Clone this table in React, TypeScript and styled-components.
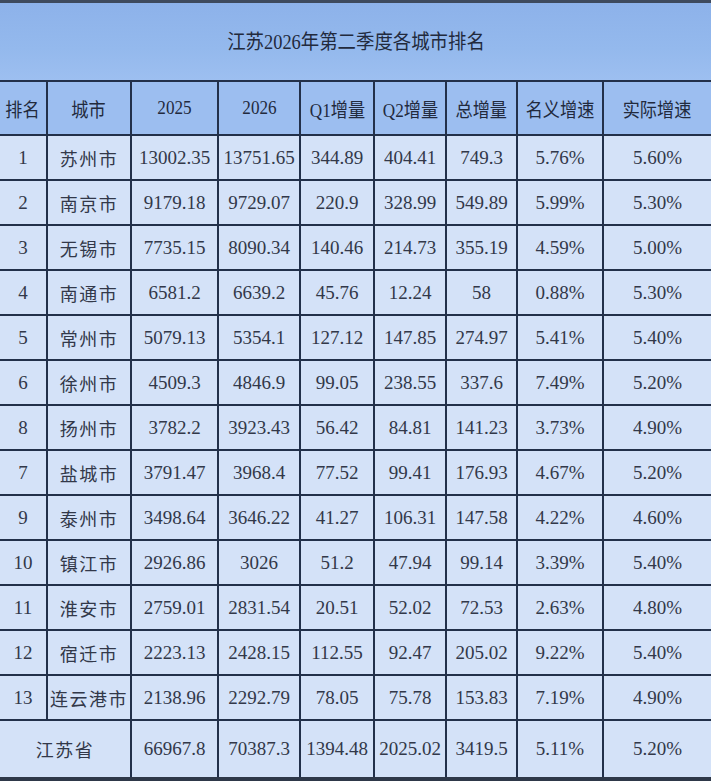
import React from "react";
import styled, { createGlobalStyle } from "styled-components";

const Global = createGlobalStyle`
  html, body { margin: 0; padding: 0; background: #d3e1f8; }
  body { font-family: "Liberation Serif", "Noto Sans CJK SC", serif; }
`;

const Page = styled.div`
  width: 711px;
  display: flex;
  flex-direction: column;
`;

const EdgeBar = styled.div<{ $h: number; $c: string }>`
  height: ${(p) => p.$h}px;
  background: ${(p) => p.$c};
`;

const Grid = styled.div`
  display: grid;
  grid-template-columns: 46px 82px 85px 80px 72px 70px 69px 84px 107px;
  grid-template-rows: 77px 52px repeat(13, 43px) 56px;
  gap: 2px;
  background: #22304a;
`;

const TitleCell = styled.div`
  grid-column: 1 / -1;
  display: flex;
  align-items: center;
  justify-content: center;
  background: linear-gradient(180deg, #8db2ea 0%, #94b9ed 60%, #9dbff0 100%);
  color: #222a3d;
  font-size: 20px;
  padding-bottom: 2px;
`;

const HeadCell = styled.div`
  display: flex;
  align-items: center;
  justify-content: center;
  background: #9cbef0;
  color: #222a3d;
  font-size: 19.5px;
  white-space: nowrap;
  overflow: hidden;
`;

const Condensed = styled.span<{ $sx: number }>`
  display: inline-block;
  transform: scaleX(${(p) => p.$sx});
  white-space: nowrap;
`;

const DataCell = styled.div<{ $cjk?: boolean; $span?: number }>`
  grid-column: span ${(p) => p.$span ?? 1};
  display: flex;
  align-items: center;
  justify-content: center;
  background: #d4e2f8;
  color: #323849;
  font-size: ${(p) => (p.$cjk ? 18 : 19)}px;
  letter-spacing: ${(p) => (p.$cjk ? "1.5px" : "0")};
  font-family: ${(p) =>
    p.$cjk ? `"Noto Sans CJK SC", sans-serif` : `"Liberation Serif", "Noto Sans CJK SC", serif`};
  white-space: nowrap;
  overflow: hidden;
`;

const headers = ["排名", "城市", "2025", "2026", "Q1增量", "Q2增量", "总增量", "名义增速", "实际增速"];

const rows: string[][] = [
  ["1", "苏州市", "13002.35", "13751.65", "344.89", "404.41", "749.3", "5.76%", "5.60%"],
  ["2", "南京市", "9179.18", "9729.07", "220.9", "328.99", "549.89", "5.99%", "5.30%"],
  ["3", "无锡市", "7735.15", "8090.34", "140.46", "214.73", "355.19", "4.59%", "5.00%"],
  ["4", "南通市", "6581.2", "6639.2", "45.76", "12.24", "58", "0.88%", "5.30%"],
  ["5", "常州市", "5079.13", "5354.1", "127.12", "147.85", "274.97", "5.41%", "5.40%"],
  ["6", "徐州市", "4509.3", "4846.9", "99.05", "238.55", "337.6", "7.49%", "5.20%"],
  ["8", "扬州市", "3782.2", "3923.43", "56.42", "84.81", "141.23", "3.73%", "4.90%"],
  ["7", "盐城市", "3791.47", "3968.4", "77.52", "99.41", "176.93", "4.67%", "5.20%"],
  ["9", "泰州市", "3498.64", "3646.22", "41.27", "106.31", "147.58", "4.22%", "4.60%"],
  ["10", "镇江市", "2926.86", "3026", "51.2", "47.94", "99.14", "3.39%", "5.40%"],
  ["11", "淮安市", "2759.01", "2831.54", "20.51", "52.02", "72.53", "2.63%", "4.80%"],
  ["12", "宿迁市", "2223.13", "2428.15", "112.55", "92.47", "205.02", "9.22%", "5.40%"],
  ["13", "连云港市", "2138.96", "2292.79", "78.05", "75.78", "153.83", "7.19%", "4.90%"],
];

const total = ["66967.8", "70387.3", "1394.48", "2025.02", "3419.5", "5.11%", "5.20%"];

export default function App() {
  return (
    <>
      <Global />
      <Page>
        <EdgeBar $h={3} $c="#3e4a5e" />
        <Grid>
          <TitleCell>
            <Condensed $sx={0.92}>江苏2026年第二季度各城市排名</Condensed>
          </TitleCell>
          {headers.map((h) => (
            <HeadCell key={h}>
              <Condensed $sx={0.88}>{h}</Condensed>
            </HeadCell>
          ))}
          {rows.map((r) =>
            r.map((v, i) => (
              <DataCell key={r[0] + "-" + i} $cjk={i === 1}>
                {v}
              </DataCell>
            ))
          )}
          <DataCell $cjk $span={2}>
            江苏省
          </DataCell>
          {total.map((v, i) => (
            <DataCell key={"t" + i}>{v}</DataCell>
          ))}
        </Grid>
        <EdgeBar $h={4} $c="#2e3849" />
      </Page>
    </>
  );
}
